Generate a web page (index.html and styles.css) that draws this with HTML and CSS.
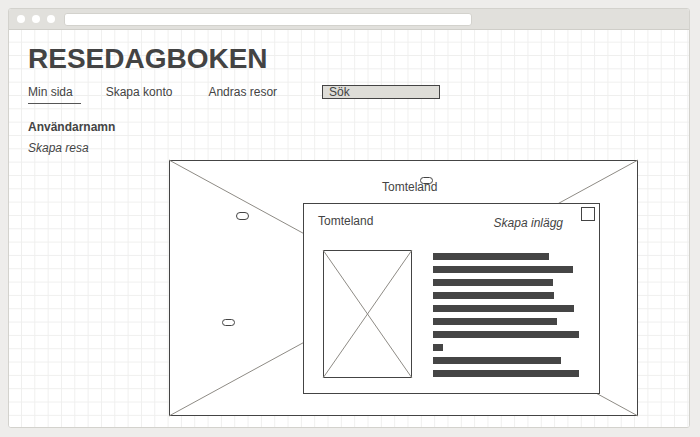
FILE: index.html
```html
<!DOCTYPE html>
<html lang="sv">
<head>
<meta charset="utf-8">
<title>Resedagboken</title>
<link rel="stylesheet" href="styles.css">
</head>
<body>
<div class="window">
  <div class="titlebar">
    <span class="dot"></span><span class="dot"></span><span class="dot"></span>
    <div class="address"></div>
  </div>
  <div class="content">
    <h1 class="title">RESEDAGBOKEN</h1>
    <nav class="nav">
      <a class="nav-item nav-active">Min sida</a>
      <a class="nav-item nav-konto">Skapa konto</a>
      <a class="nav-item nav-andras">Andras resor</a>
      <div class="search">Sök</div>
    </nav>
    <div class="username">Användarnamn</div>
    <div class="create-trip">Skapa resa</div>
    <div class="map">
      <svg class="cross" viewBox="0 0 100 100" preserveAspectRatio="none">
        <line x1="0" y1="0" x2="100" y2="100" vector-effect="non-scaling-stroke"/>
        <line x1="100" y1="0" x2="0" y2="100" vector-effect="non-scaling-stroke"/>
      </svg>
      <span class="pill pill-1"></span>
      <span class="pill pill-2"></span>
      <span class="pill pill-3"></span>
      <div class="map-label">Tomteland</div>
      <div class="card">
        <div class="card-head">
          <span class="card-title">Tomteland</span>
          <span class="card-action">Skapa inlägg</span>
          <span class="checkbox"></span>
        </div>
        <div class="card-body">
          <div class="image">
            <svg class="cross" viewBox="0 0 100 100" preserveAspectRatio="none">
              <line x1="0" y1="0" x2="100" y2="100" vector-effect="non-scaling-stroke"/>
              <line x1="100" y1="0" x2="0" y2="100" vector-effect="non-scaling-stroke"/>
            </svg>
          </div>
          <div class="lines">
            <span class="bar" style="width:116px"></span>
            <span class="bar" style="width:140px"></span>
            <span class="bar" style="width:120px"></span>
            <span class="bar" style="width:121px"></span>
            <span class="bar" style="width:141px"></span>
            <span class="bar" style="width:124px"></span>
            <span class="bar" style="width:146px"></span>
            <span class="bar" style="width:10px"></span>
            <span class="bar" style="width:128px"></span>
            <span class="bar" style="width:146px"></span>
          </div>
        </div>
      </div>
    </div>
  </div>
</div>
</body>
</html>
```

FILE: styles.css
```css
html, body {
  margin: 0;
  padding: 0;
}
body {
  background: #eeedeb;
  font-family: "Liberation Sans", Arial, sans-serif;
  color: #444;
  width: 700px;
  height: 437px;
  overflow: hidden;
}
.window {
  margin: 8px 0 0 8px;
  width: 682px;
  height: 420px;
  box-sizing: border-box;
  border: 1px solid #d3d2cd;
  border-radius: 3px;
  overflow: hidden;
  background: #fff;
}
.titlebar {
  height: 20px;
  border-bottom: 1px solid #cfcec9;
  background: #e1e0dc;
  display: flex;
  align-items: center;
  padding-left: 8px;
}
.dot {
  width: 8px;
  height: 8px;
  border-radius: 50%;
  background: #fff;
  margin-right: 7px;
}
.dot:nth-child(3) {
  margin-right: 9px;
}
.address {
  width: 408px;
  height: 13px;
  box-sizing: border-box;
  background: #fff;
  border: 1px solid #d3d2cd;
  border-radius: 3px;
}
.content {
  height: 398px;
  box-sizing: border-box;
  padding: 13px 0 0 19px;
  background-color: #fff;
  background-image:
    linear-gradient(90deg, #efefee 1px, transparent 1px),
    linear-gradient(180deg, #efefee 1px, transparent 1px);
  background-size: 13.333px 13.333px;
  background-position: 12px 11.7px;
}
.title {
  margin: 0;
  font-size: 28px;
  line-height: 32px;
  font-weight: bold;
  color: #434343;
}
.nav {
  display: flex;
  align-items: flex-start;
  margin-top: 10px;
  font-size: 12px;
  line-height: 14px;
}
.nav-item {
  color: #444;
}
.nav-active {
  padding: 0 8px 4px 0;
  border-bottom: 1px solid #555;
  margin-right: 25px;
}
.nav-konto {
  margin-right: 36px;
}
.nav-andras {
  margin-right: 45px;
}
.search {
  width: 118px;
  height: 14px;
  box-sizing: border-box;
  border: 1px solid #444;
  background: #deddd8;
  padding-left: 6px;
  line-height: 12px;
}
.username {
  margin-top: 16px;
  font-size: 12px;
  line-height: 14px;
  font-weight: bold;
}
.create-trip {
  margin-top: 7px;
  font-size: 12px;
  line-height: 14px;
  font-style: italic;
}
.map {
  position: relative;
  margin: 5px 0 0 141px;
  width: 469px;
  height: 256px;
  box-sizing: border-box;
  border: 1px solid #444;
  background: #fff;
  font-size: 12px;
  line-height: 14px;
}
.cross {
  position: absolute;
  top: 0;
  left: 0;
  width: 100%;
  height: 100%;
  overflow: visible;
}
.map > .cross {
  top: -1px;
  left: -1px;
  width: calc(100% + 2px);
  height: calc(100% + 2px);
}
.cross line {
  stroke: #8e8b85;
  stroke-width: 1;
}
.map-label {
  position: relative;
  margin: 19px 0 0 212px;
  width: max-content;
}
.pill {
  position: absolute;
  z-index: 2;
  width: 13px;
  height: 7px;
  box-sizing: border-box;
  border: 1px solid #444;
  border-radius: 4px;
  background: #fff;
}
.pill-1 { left: 250px; top: 16px; }
.pill-2 { left: 66px; top: 51px; height: 8px; }
.pill-3 { left: 52px; top: 158px; }
.card {
  position: relative;
  z-index: 1;
  margin: 9px 0 0 133px;
  width: 297px;
  height: 191px;
  box-sizing: border-box;
  border: 1px solid #444;
  background: #fff;
}
.card-head {
  display: flex;
  align-items: flex-start;
  padding: 0 4px 0 14px;
}
.card-title {
  margin-top: 10px;
}
.card-action {
  margin: 12px 18px 0 auto;
  font-style: italic;
}
.checkbox {
  margin-top: 3px;
  width: 14px;
  height: 14px;
  box-sizing: border-box;
  border: 1px solid #444;
}
.card-body {
  display: flex;
  align-items: flex-start;
  margin-top: 20px;
  padding-left: 19px;
}
.image {
  position: relative;
  width: 89px;
  height: 128px;
  box-sizing: border-box;
  border: 1px solid #444;
}
.image .cross {
  top: -1px;
  left: -1px;
  width: calc(100% + 2px);
  height: calc(100% + 2px);
}
.lines {
  display: flex;
  flex-direction: column;
  gap: 6px;
  margin: 3px 0 0 21px;
}
.bar {
  display: block;
  height: 7px;
  background: #454545;
}
```
